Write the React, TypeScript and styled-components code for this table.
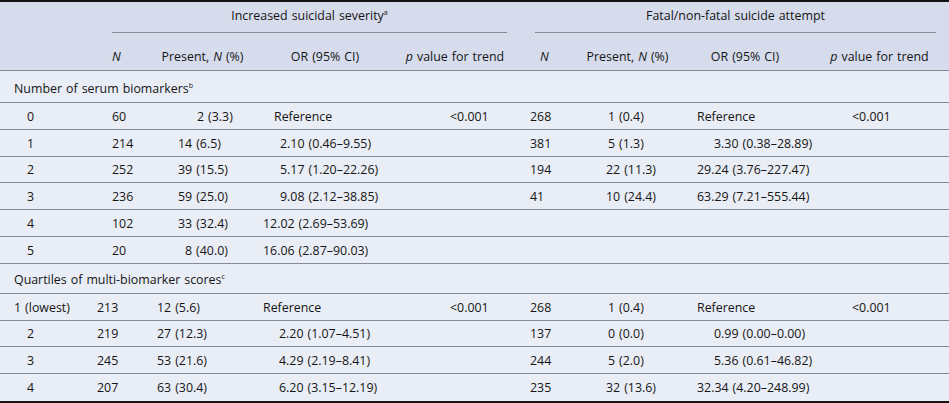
import React from "react";
import styled, { createGlobalStyle } from "styled-components";

const Global = createGlobalStyle`
  html, body { margin: 0; padding: 0; background: #e9edf6; }
  body { font-family: "Open Sans", "Noto Sans", sans-serif; color: #151515; }
`;

const COLS = "95px 55px 105px 140px 120px 60px 105px 130px 139px";

const Table = styled.div`
  width: 949px;
  height: 403px;
  box-sizing: border-box;
  border-top: 2px solid #141414;
  border-bottom: 2px solid #141414;
  background: #e9edf6;
  font-size: 12.4px;
  line-height: 1;
  word-spacing: 0.8px;
`;

const Head = styled.div`
  background: #d6dcec;
`;

const Row = styled.div<{ $h: number; $line?: boolean; $pt?: number }>`
  display: grid;
  grid-template-columns: ${COLS};
  height: ${(p) => p.$h}px;
  box-sizing: border-box;
  border-bottom: ${(p) => (p.$line === false ? "none" : "1px solid #858a94")};
  padding-top: ${(p) => p.$pt ?? 0}px;
  align-items: center;
`;

const Cell = styled.div<{ $pl?: number; $center?: boolean; $span?: string }>`
  padding-left: ${(p) => (p.$center ? 0 : p.$pl ?? 0)}px;
  text-align: ${(p) => (p.$center ? "center" : "left")};
  white-space: nowrap;
  ${(p) => (p.$span ? `grid-column: ${p.$span};` : "")}
`;

const GroupCell = styled.div<{ $span: string; $ml: number; $mr: number }>`
  grid-column: ${(p) => p.$span};
  align-self: stretch;
  margin: 0 ${(p) => p.$mr}px 0 ${(p) => p.$ml}px;
  border-bottom: 1px solid #858a94;
  display: flex;
  align-items: center;
  justify-content: center;
  padding-bottom: 1px;
`;

const I = styled.i`
  font-style: italic;
`;

const Sup = styled.sup`
  font-size: 7px;
  vertical-align: 5px;
  line-height: 0;
`;

type C = [string, number];

type DataRow = { h: number; line?: boolean; cells: C[] };

const serum: DataRow[] = [
  { h: 26.83, cells: [["0", 27], ["60", 17], ["2 (3.3)", 47], ["Reference", 19], ["<0.001", 55], ["268", 15], ["1 (0.4)", 33], ["Reference", 17], ["<0.001", 42]] },
  { h: 26.83, cells: [["1", 27], ["214", 17], ["14 (6.5)", 28], ["2.10 (0.46–9.55)", 25], ["", 0], ["381", 15], ["5 (1.3)", 33], ["3.30 (0.38–28.89)", 34], ["", 0]] },
  { h: 26.83, cells: [["2", 27], ["252", 17], ["39 (15.5)", 28], ["5.17 (1.20–22.26)", 25], ["", 0], ["194", 15], ["22 (11.3)", 31], ["29.24 (3.76–227.47)", 17], ["", 0]] },
  { h: 26.83, cells: [["3", 27], ["236", 17], ["59 (25.0)", 28], ["9.08 (2.12–38.85)", 25], ["", 0], ["41", 15], ["10 (24.4)", 31], ["63.29 (7.21–555.44)", 17], ["", 0]] },
  { h: 26.83, cells: [["4", 27], ["102", 17], ["33 (32.4)", 28], ["12.02 (2.69–53.69)", 8], ["", 0], ["", 0], ["", 0], ["", 0], ["", 0]] },
  { h: 26.85, cells: [["5", 27], ["20", 17], ["8 (40.0)", 35], ["16.06 (2.87–90.03)", 8], ["", 0], ["", 0], ["", 0], ["", 0], ["", 0]] },
];

const quart: DataRow[] = [
  { h: 26.75, cells: [["1 (lowest)", 14], ["213", 2], ["12 (5.6)", 7], ["Reference", 8], ["<0.001", 55], ["268", 15], ["1 (0.4)", 33], ["Reference", 17], ["<0.001", 42]] },
  { h: 26.75, cells: [["2", 27], ["219", 2], ["27 (12.3)", 7], ["2.20 (1.07–4.51)", 24], ["", 0], ["137", 15], ["0 (0.0)", 33], ["0.99 (0.00–0.00)", 34], ["", 0]] },
  { h: 26.75, cells: [["3", 27], ["245", 2], ["53 (21.6)", 7], ["4.29 (2.19–8.41)", 24], ["", 0], ["244", 15], ["5 (2.0)", 33], ["5.36 (0.61–46.82)", 34], ["", 0]] },
  { h: 26.75, line: false, cells: [["4", 27], ["207", 2], ["63 (30.4)", 7], ["6.20 (3.15–12.19)", 24], ["", 0], ["235", 15], ["32 (13.6)", 31], ["32.34 (4.20–248.99)", 17], ["", 0]] },
];

const Rows = ({ rows }: { rows: DataRow[] }) => (
  <>
    {rows.map((r, i) => (
      <Row key={i} $h={r.h} $line={r.line} $pt={2}>
        {r.cells.map(([t, pl], j) => (
          <Cell key={j} $pl={pl}>
            {t}
          </Cell>
        ))}
      </Row>
    ))}
  </>
);

export default function App() {
  return (
    <>
      <Global />
      <Table>
        <Head>
          <Row $h={31} $line={false}>
            <Cell />
            <GroupCell $span="2 / 6" $ml={17} $mr={8}>
              <span>
                Increased suicidal severity<Sup>a</Sup>
              </span>
            </GroupCell>
            <GroupCell $span="6 / 10" $ml={20} $mr={13}>
              <span>Fatal/non-fatal suicide attempt</span>
            </GroupCell>
          </Row>
          <Row $h={38} $pt={11}>
            <Cell />
            <Cell $pl={17}>
              <I>N</I>
            </Cell>
            <Cell $center>
              Present, <I>N</I> (%)
            </Cell>
            <Cell $center>OR (95% CI)</Cell>
            <Cell $center>
              <I>p</I> value for trend
            </Cell>
            <Cell $pl={25}>
              <I>N</I>
            </Cell>
            <Cell $center>
              Present, <I>N</I> (%)
            </Cell>
            <Cell $center>OR (95% CI)</Cell>
            <Cell $center>
              <I>p</I> value for trend
            </Cell>
          </Row>
        </Head>
        <Row $h={32} $pt={5}>
          <Cell $span="1 / 10" $pl={14}>
            Number of serum biomarkers<Sup>b</Sup>
          </Cell>
        </Row>
        <Rows rows={serum} />
        <Row $h={30} $pt={3}>
          <Cell $span="1 / 10" $pl={14}>
            Quartiles of multi-biomarker scores<Sup>c</Sup>
          </Cell>
        </Row>
        <Rows rows={quart} />
      </Table>
    </>
  );
}
